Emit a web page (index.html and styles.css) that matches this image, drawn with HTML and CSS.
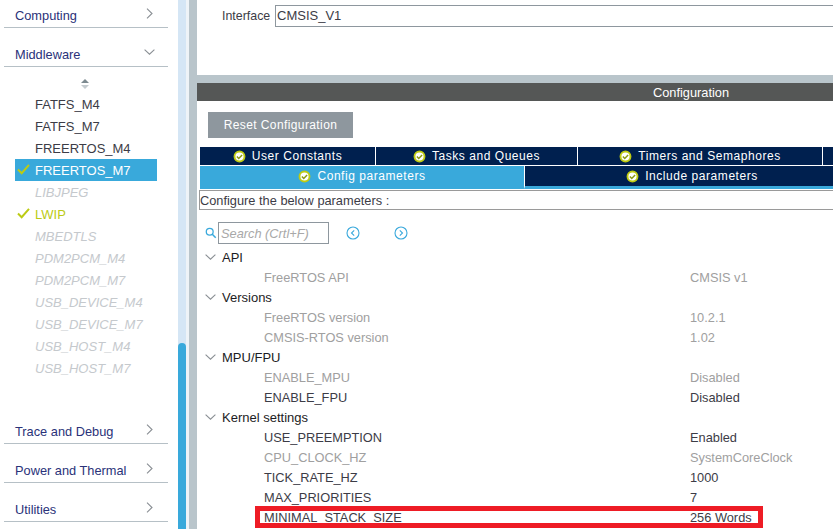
FILE: index.html
```html
<!DOCTYPE html>
<html>
<head>
  <meta charset="UTF-8">
  <title>Middleware Configuration</title>
  <link rel="stylesheet" href="styles.css">
</head>
<body>
  <svg class="defs" width="0" height="0">
    <symbol id="tick" viewBox="0 0 14 14">
      <circle cx="7" cy="7" r="5.4" fill="#fff" stroke="#bfcb12" stroke-width="2"/>
      <path d="M4.2 7l2 2.1 3.6-3.8" fill="none" stroke="#8c9a10" stroke-width="1.6"/>
    </symbol>
    <symbol id="right" viewBox="0 0 7 11">
      <path d="M1 .7l5 4.800-5 4.800" fill="none" stroke="#8a8f94" stroke-width="1.100"/>
    </symbol>
    <symbol id="down" viewBox="0 0 11 6">
      <path d="M.6 .6l4.900 4.600 4.900-4.600" fill="none" stroke="#8a8f94" stroke-width="1.100"/>
    </symbol>
  </svg>

  <div class="sidebar">
    <div class="category"><span>Computing</span><svg class="chev-right"><use href="#right"/></svg></div>
    <div class="category"><span>Middleware</span><svg class="chev-down"><use href="#down"/></svg></div>

    <div class="scroll-arrows">
      <span class="arrow-up"></span>
      <span class="arrow-down"></span>
    </div>

    <ul class="items">
      <li>FATFS_M4</li>
      <li>FATFS_M7</li>
      <li>FREERTOS_M4</li>
      <li class="selected"><svg class="check" viewBox="0 0 14 12"><path d="M1 6l4 4 8-9" fill="none" stroke="#bccb14" stroke-width="2.200"/></svg>FREERTOS_M7</li>
      <li class="off">LIBJPEG</li>
      <li class="on"><svg class="check" viewBox="0 0 14 12"><path d="M1 6l4 4 8-9" fill="none" stroke="#bccb14" stroke-width="2.200"/></svg>LWIP</li>
      <li class="off">MBEDTLS</li>
      <li class="off">PDM2PCM_M4</li>
      <li class="off">PDM2PCM_M7</li>
      <li class="off">USB_DEVICE_M4</li>
      <li class="off">USB_DEVICE_M7</li>
      <li class="off">USB_HOST_M4</li>
      <li class="off">USB_HOST_M7</li>
    </ul>

    <div class="category"><span>Trace and Debug</span><svg class="chev-right"><use href="#right"/></svg></div>
    <div class="category"><span>Power and Thermal</span><svg class="chev-right"><use href="#right"/></svg></div>
    <div class="category"><span>Utilities</span><svg class="chev-right"><use href="#right"/></svg></div>
  </div>

  <div class="scrollbar"><div class="thumb"></div></div>

  <div class="main">
    <div class="interface-row">
      <label class="interface-label">Interface</label>
      <div class="interface-value">CMSIS_V1</div>
    </div>

    <div class="config-title">Configuration</div>

    <button class="reset-btn" type="button">Reset Configuration</button>

    <div class="tabs-top">
      <div class="tab tab-a"><svg class="tab-icon"><use href="#tick"/></svg>User Constants</div>
      <div class="tab tab-b"><svg class="tab-icon"><use href="#tick"/></svg>Tasks and Queues</div>
      <div class="tab tab-c"><svg class="tab-icon"><use href="#tick"/></svg>Timers and Semaphores</div>
      <div class="tab tab-d"></div>
    </div>
    <div class="tabs-bottom">
      <div class="tab tab-active"><svg class="tab-icon"><use href="#tick"/></svg>Config parameters</div>
      <div class="tab tab-rest"><svg class="tab-icon"><use href="#tick"/></svg>Include parameters</div>
    </div>

    <div class="hint">Configure the below parameters :</div>

    <div class="search-row">
      <svg class="search-icon" viewBox="0 0 14 14"><circle cx="5.500" cy="5.500" r="4" fill="none" stroke="#3aa9dc" stroke-width="1.500"/><path d="M8.500 8.500l4 4" stroke="#3aa9dc" stroke-width="1.800"/></svg>
      <div class="search-box">Search (Crtl+F)</div>
      <svg class="nav-icon nav-prev" viewBox="0 0 14 14"><circle cx="7" cy="7" r="6" fill="none" stroke="#3aa9dc" stroke-width="1.100"/><path d="M8.200 4.300l-2.700 2.700 2.700 2.700" fill="none" stroke="#3aa9dc" stroke-width="1.100"/></svg>
      <svg class="nav-icon" viewBox="0 0 14 14"><circle cx="7" cy="7" r="6" fill="none" stroke="#3aa9dc" stroke-width="1.100"/><path d="M5.800 4.300l2.700 2.700-2.700 2.700" fill="none" stroke="#3aa9dc" stroke-width="1.100"/></svg>
    </div>

    <div class="tree">
      <div class="group"><svg class="chev-group"><use href="#down"/></svg>API</div>
      <div class="param muted"><span>FreeRTOS API</span><span>CMSIS v1</span></div>

      <div class="group"><svg class="chev-group"><use href="#down"/></svg>Versions</div>
      <div class="param muted"><span>FreeRTOS version</span><span>10.2.1</span></div>
      <div class="param muted"><span>CMSIS-RTOS version</span><span>1.02</span></div>

      <div class="group"><svg class="chev-group"><use href="#down"/></svg>MPU/FPU</div>
      <div class="param muted"><span>ENABLE_MPU</span><span>Disabled</span></div>
      <div class="param"><span>ENABLE_FPU</span><span>Disabled</span></div>

      <div class="group"><svg class="chev-group"><use href="#down"/></svg>Kernel settings</div>
      <div class="param"><span>USE_PREEMPTION</span><span>Enabled</span></div>
      <div class="param muted"><span>CPU_CLOCK_HZ</span><span>SystemCoreClock</span></div>
      <div class="param"><span>TICK_RATE_HZ</span><span>1000</span></div>
      <div class="param"><span>MAX_PRIORITIES</span><span>7</span></div>
      <div class="param marked"><span>MINIMAL_STACK_SIZE</span><span>256 Words</span></div>
    </div>
  </div>
</body>
</html>
```

FILE: styles.css
```css
html,
body {
  height: 529px;
  overflow: hidden;
}

body {
  display: flex;
  margin: 0;
  background-color: #fff;
  font-family: "Liberation Sans", Arial, sans-serif;
  font-size: 12.8px;
  color: #3c3c46;
}

.defs {
  position: absolute;
}

/* left column */
.sidebar {
  flex: none;
  width: 174px;
  padding-left: 4px;
}

.category {
  display: flex;
  justify-content: space-between;
  align-items: center;
  box-sizing: border-box;
  width: 164px;
  height: 28px;
  margin-bottom: 11px;
  padding: 3px 15px 0 11px;
  border-bottom: 1px solid #b6c0c6;
  color: #2a3279;
}

.chev-right {
  width: 7px;
  height: 11px;
  margin-top: -4px;
}

.chev-down {
  width: 11px;
  height: 6px;
  margin: -5px -2px 0 0;
}

.scroll-arrows {
  display: flex;
  flex-direction: column;
  align-items: center;
  gap: 2px;
  width: 162px;
  margin-top: 12px;
  height: 14px;
}

.arrow-up {
  border: 4px solid transparent;
  border-top: 0;
  border-bottom: 4px solid #7d8a90;
}

.arrow-down {
  border: 4px solid transparent;
  border-bottom: 0;
  border-top: 4px solid #c4cbcf;
}

.items {
  list-style: none;
  margin: 0 0 37px;
  padding: 0;
}

.items li {
  position: relative;
  box-sizing: border-box;
  width: 142px;
  height: 22px;
  margin-left: 11px;
  padding-left: 20px;
  line-height: 23px;
  font-size: 13px;
}

.items .check {
  position: absolute;
  left: 2px;
  top: 5px;
  width: 13px;
  height: 11px;
}

.items .selected {
  background-color: #39a9db;
  color: #fff;
}

.items .off {
  color: #c5c9cd;
  font-style: italic;
}

.items .on {
  color: #bccb14;
}

/* scrollbar and gutter */
.scrollbar {
  flex: none;
  display: flex;
  flex-direction: column;
  justify-content: flex-end;
  width: 8px;
  margin-right: 3px;
  background-color: #d5e6f5;
  box-shadow: 3px 0 0 #eef3f7;
}

.thumb {
  height: 186px;
  border-radius: 4px 4px 0 0;
  background-color: #39a9db;
}

/* right panel */
.main {
  flex: none;
  width: 988px;
  border-left: 8px solid #b9c5cb;
}

.interface-row {
  display: flex;
  align-items: center;
  height: 75px;
  padding: 0 0 43px 25px;
  box-sizing: border-box;
}

.interface-label {
  width: 53px;
  font-size: 12.4px;
}

.interface-value {
  flex: 1;
  box-sizing: border-box;
  height: 22px;
  padding-left: 1px;
  border: 1px solid #8e979e;
  font-size: 13px;
  line-height: 20px;
}

.config-title {
  height: 18px;
  border-top: 8px solid #b9c5cb;
  background-color: #555756;
  color: #fff;
  text-align: center;
  line-height: 19px;
}

.reset-btn {
  display: block;
  width: 145px;
  height: 26px;
  margin: 11px 0 9px 11px;
  border: 0;
  background-color: #8e979e;
  color: #fff;
  font-family: inherit;
  font-size: 12px;
  letter-spacing: 0.4px;
}

.tabs-top,
.tabs-bottom {
  display: flex;
  margin-left: 3px;
}

.tabs-top {
  gap: 1px;
  height: 18px;
  margin-bottom: 1px;
}

.tabs-bottom {
  height: 23px;
}

.tab {
  display: flex;
  justify-content: center;
  align-items: center;
  box-sizing: border-box;
  background-color: #00204f;
  color: #fff;
  font-size: 12px;
  letter-spacing: 0.55px;
}

.tab-a {
  width: 175px;
}

.tab-b {
  width: 201px;
}

.tab-c {
  width: 244px;
}

.tab-d {
  flex: 1;
}

.tab-active {
  width: 324px;
  padding-bottom: 3px;
  background-color: #39a9db;
}

.tab-rest {
  width: 335px;
  border-left: 1px solid #fff;
  border-bottom: 3px solid #39a9db;
}

.tab-icon {
  flex: none;
  width: 13px;
  height: 13px;
  margin-right: 6px;
}

.hint {
  box-sizing: border-box;
  height: 20px;
  margin: 1px 0 12px 2px;
  border: 1px solid #9a9a9a;
  border-right: 0;
  line-height: 19px;
}

.search-row {
  display: flex;
  align-items: center;
  height: 22px;
  padding-left: 8px;
}

.search-icon {
  width: 12px;
  height: 12px;
  margin-right: 1px;
}

.search-box {
  box-sizing: border-box;
  width: 111px;
  height: 22px;
  padding-left: 2px;
  border: 1px solid #8e979e;
  color: #a8a8a8;
  font-style: italic;
  line-height: 21px;
}

.nav-icon {
  width: 14px;
  height: 14px;
  margin-left: 34px;
}

.nav-prev {
  margin-left: 17px;
}

.tree {
  margin-top: 3px;
}

.group {
  display: flex;
  align-items: center;
  height: 20px;
  padding-left: 8px;
  color: #1c1c24;
  font-size: 13px;
}

.chev-group {
  flex: none;
  width: 11px;
  height: 6px;
  margin-right: 6px;
}

.param {
  position: relative;
  display: grid;
  grid-template-columns: 426px 1fr;
  height: 20px;
  padding-left: 67px;
  font-size: 12.8px;
  line-height: 22px;
}

.muted {
  color: #a0a0a0;
}

.marked::after {
  content: "";
  position: absolute;
  left: 58px;
  top: -1px;
  width: 498px;
  height: 12px;
  border: 5px solid #ee1c25;
}
```
